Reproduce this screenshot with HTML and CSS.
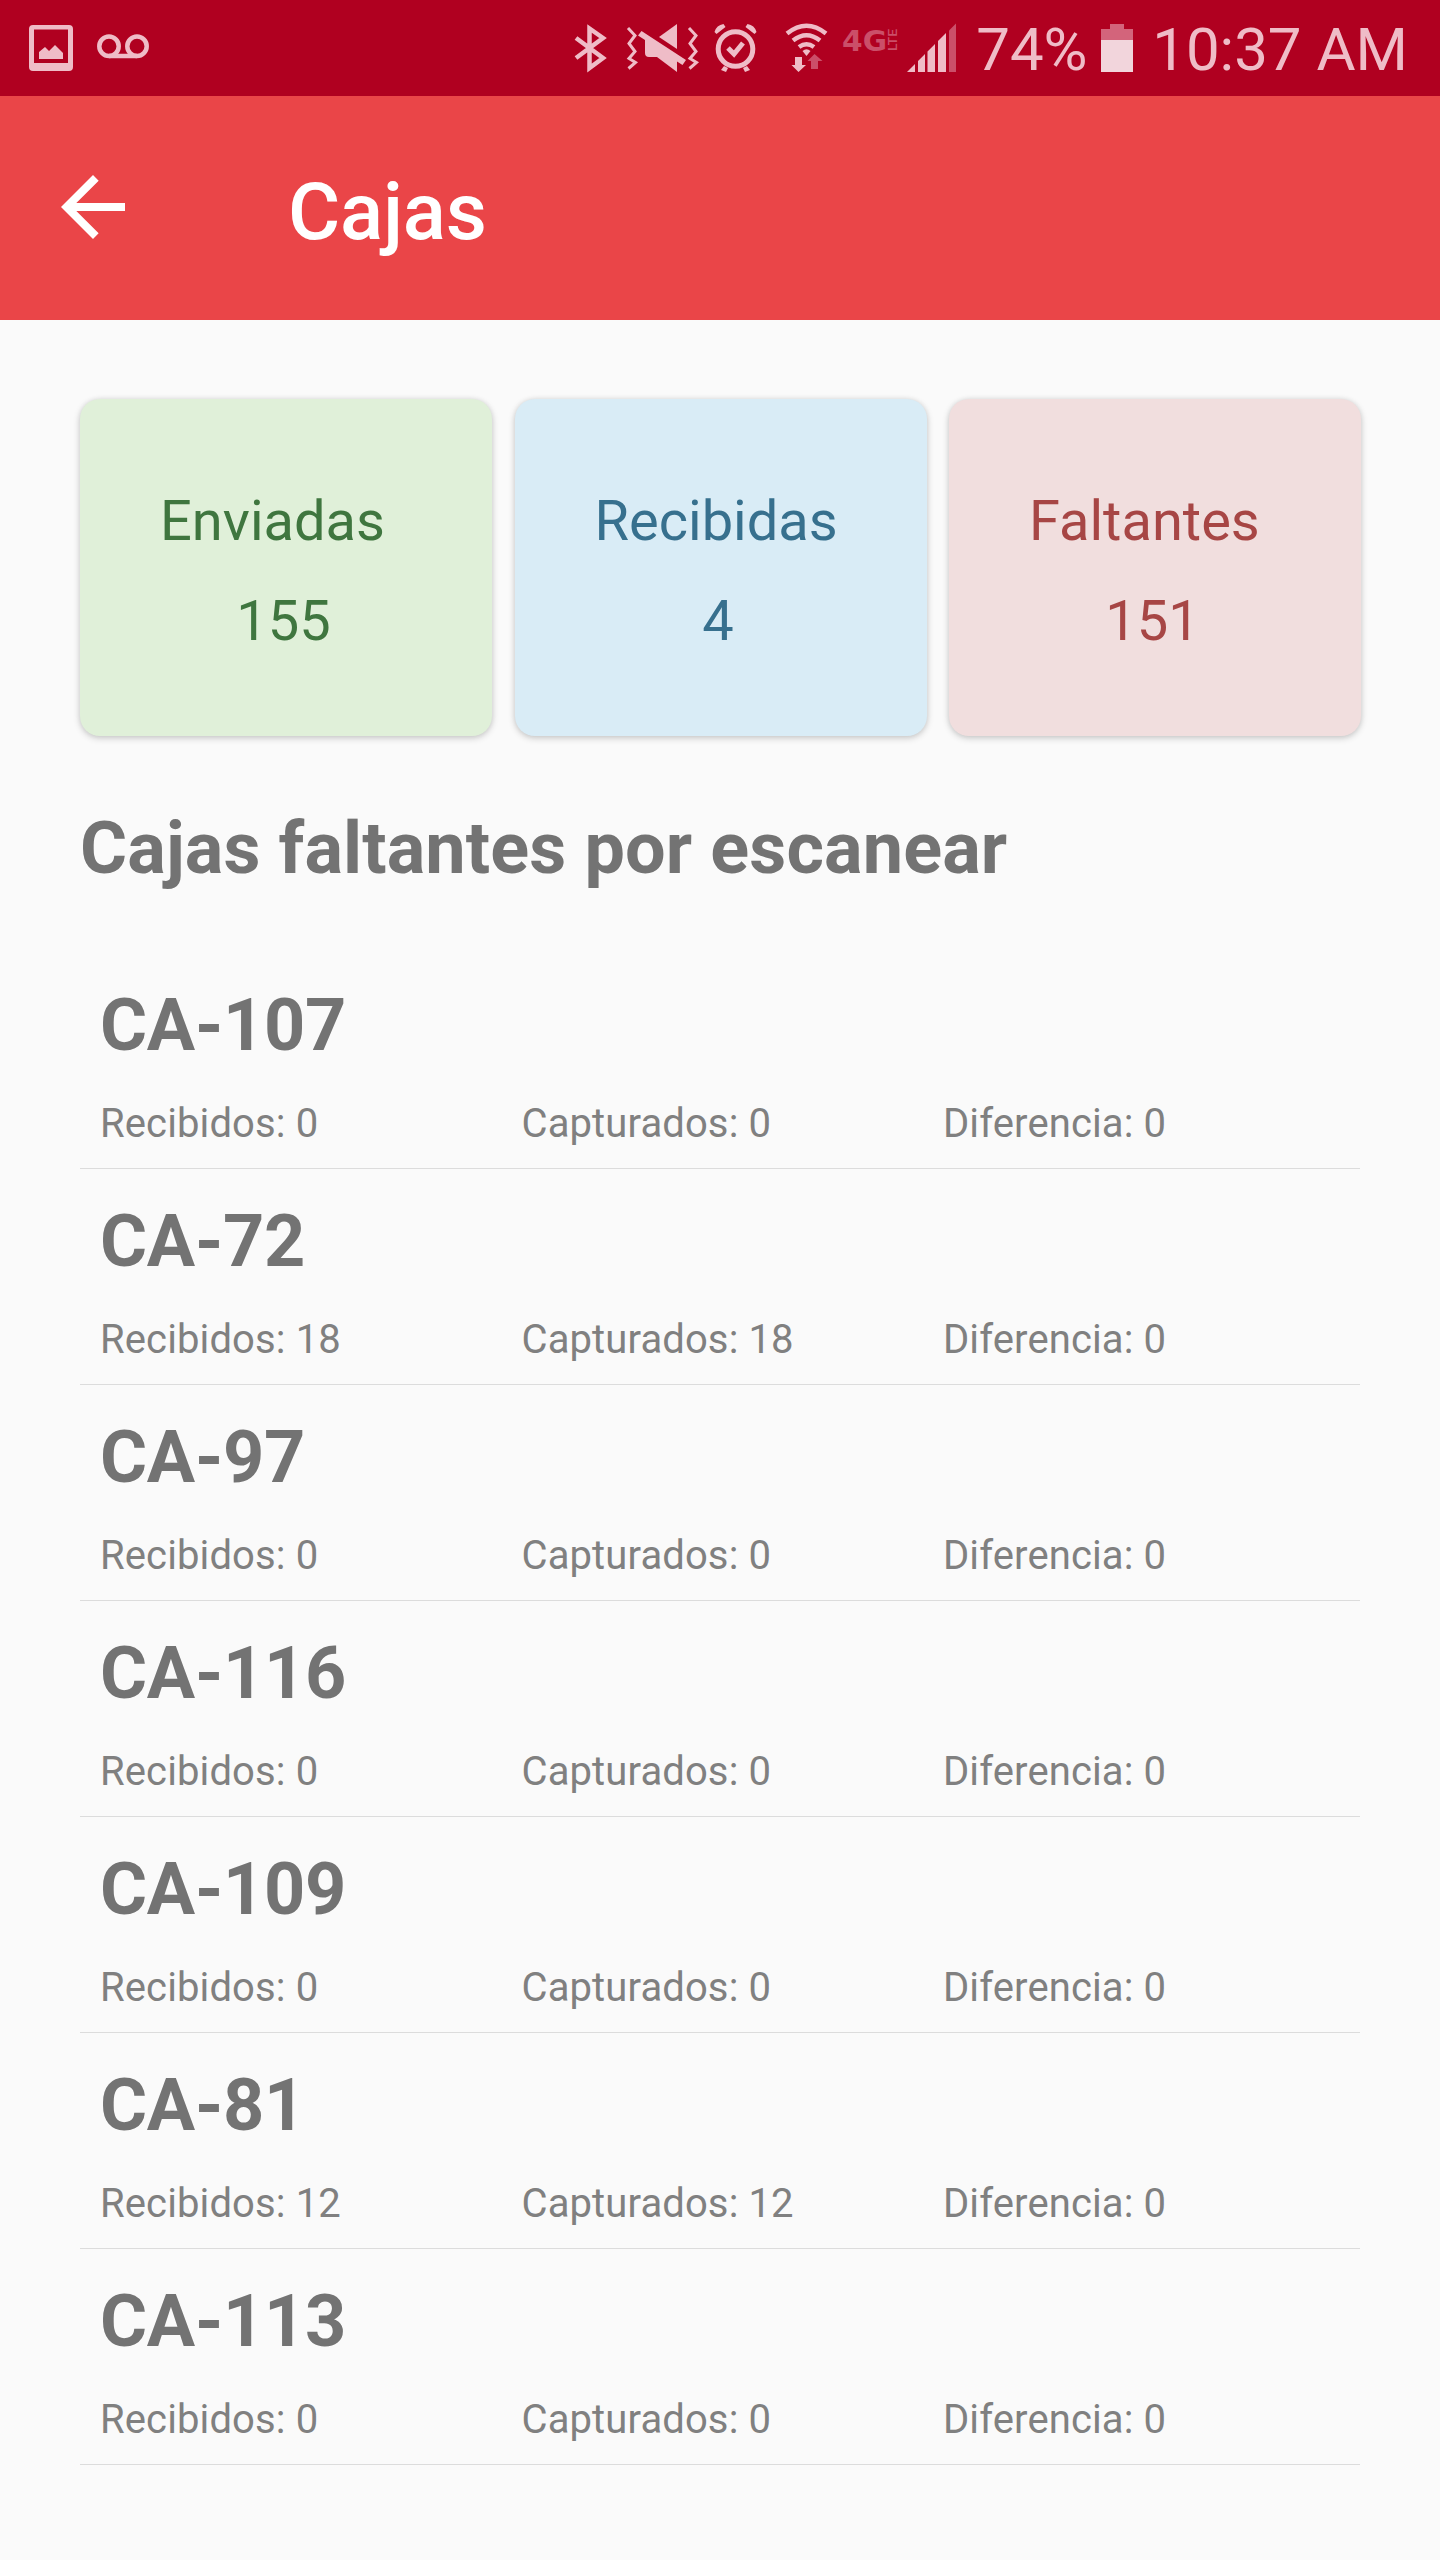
FILE: index.html
```
<!DOCTYPE html>
<html lang="es">
  <head>
    <meta charset="UTF-8" />
    <meta name="viewport" content="width=device-width, initial-scale=1.0" />
    <title>Cajas</title>
    <link rel="stylesheet" href="styles.css">
  </head>
  <body>
    <div class="statusbar">
      <svg class="icon" width="62" height="96" viewBox="24 0 62 96">
        <path fill-rule="evenodd" d="M33 25h36q4 0 4 4v38q0 4-4 4H33q-4 0-4-4V29q0-4 4-4zM34 29.500v33.500h34V29.500z" />
        <path d="M39 59v-7l6-5 4 4 6-6 8 8v6z" />
      </svg>
      <svg class="icon line" width="70" height="96" viewBox="86 0 70 96">
        <circle cx="109" cy="46.300" r="9.700" />
        <circle cx="137" cy="46.300" r="9.700" />
        <path d="M109 56h28" />
      </svg>
      <div class="status-right">
        <svg class="icon line" width="45" height="96" viewBox="570 0 45 96">
          <path d="M576 38l27 20-13.500 10V28.500L603 38l-27 20" />
        </svg>
        <svg class="icon" width="91" height="96" viewBox="615 0 91 96">
          <path class="zigzag" d="M628 28l7 7.500-6 8 6 8-6 7 6.500 4-7 6M689 28l7 7.500-6 8 6 8-6 7 6.500 4-7 6" />
          <path d="M677 24v25l-18-12z" />
          <path d="M641.500 31l44.500 29-3.500 5-5.500-3.500V72l-20-15h-8q-4 0-4-4V40l-7-4.500z" />
        </svg>
        <svg class="icon" width="69" height="96" viewBox="706 0 69 96">
          <circle class="ring" cx="735.500" cy="49" r="17.300" />
          <path class="ring" d="M728 48l6 6 9-11" />
          <path d="M714.500 32q2-7 9-8l2 3-9 7zM756.500 32q-2-7-9-8l-2 3 9 7zM724 66l4 2-2 4-5-2zM747 66l-4 2 2 4 5-2z" />
        </svg>
        <svg class="icon" width="63" height="96" viewBox="775 0 63 96">
          <path class="wave" d="M787 33.500q19.500-15.500 39 0M793 40.500q13.500-10.500 27 0M799 47q7.500-5.500 15 0" />
          <path d="M802.500 51q4-3.500 8 0l-4 5z" />
          <path d="M795 57h7v8h4l-7.500 7-7-7h3.500z" />
          <path class="dim" d="M811 69h7v-8h4.500l-8-7-7 7h3.500z" />
        </svg>
        <svg class="icon" width="62" height="96" viewBox="838 0 62 96">
          <text class="dim network" x="842" y="50.500" textLength="45" lengthAdjust="spacingAndGlyphs">4G</text>
          <text class="dim lte" transform="translate(897 51) rotate(-90)" textLength="22" lengthAdjust="spacingAndGlyphs">LTE</text>
        </svg>
        <svg class="icon" width="76" height="96" viewBox="900 0 76 96">
          <path d="M907 72l8-8v8zM918 72V61l7-7v18zM927.500 72V51.500l7.500-7.500v28zM938 72V41l8-8v39z" />
          <path class="dim" d="M949 72V30.500l7-7v48.500z" />
        </svg>
        <span class="battery-level">74%</span>
        <svg class="icon" width="60" height="96" viewBox="1091 0 60 96">
          <path class="battery-empty" d="M1100 40V29h9v-5h14v5h9v11z" />
          <path class="battery-full" d="M1100 40h32v32h-32z" />
        </svg>
        <span class="clock">10:37 AM</span>
      </div>
    </div>

    <header class="appbar">
      <svg class="back" width="96" height="96" viewBox="0 0 24 24">
        <path d="M20 11H7.830l5.590-5.590L12 4l-8 8 8 8 1.410-1.410L7.830 13H20v-2z" />
      </svg>
      <h1 class="title">Cajas</h1>
    </header>

    <main class="content">
      <div class="cards">
        <div class="card green">
          <div class="label">Enviadas</div>
          <div class="count">155</div>
        </div>
        <div class="card blue">
          <div class="label">Recibidas</div>
          <div class="count">4</div>
        </div>
        <div class="card red">
          <div class="label">Faltantes</div>
          <div class="count">151</div>
        </div>
      </div>

      <h2 class="heading">Cajas faltantes por escanear</h2>

      <div class="list">
        <div class="item">
          <h3 class="name">CA-107</h3>
          <div class="details">
            <span>Recibidos: 0</span>
            <span>Capturados: 0</span>
            <span>Diferencia: 0</span>
          </div>
        </div>
        <div class="item">
          <h3 class="name">CA-72</h3>
          <div class="details">
            <span>Recibidos: 18</span>
            <span>Capturados: 18</span>
            <span>Diferencia: 0</span>
          </div>
        </div>
        <div class="item">
          <h3 class="name">CA-97</h3>
          <div class="details">
            <span>Recibidos: 0</span>
            <span>Capturados: 0</span>
            <span>Diferencia: 0</span>
          </div>
        </div>
        <div class="item">
          <h3 class="name">CA-116</h3>
          <div class="details">
            <span>Recibidos: 0</span>
            <span>Capturados: 0</span>
            <span>Diferencia: 0</span>
          </div>
        </div>
        <div class="item">
          <h3 class="name">CA-109</h3>
          <div class="details">
            <span>Recibidos: 0</span>
            <span>Capturados: 0</span>
            <span>Diferencia: 0</span>
          </div>
        </div>
        <div class="item">
          <h3 class="name">CA-81</h3>
          <div class="details">
            <span>Recibidos: 12</span>
            <span>Capturados: 12</span>
            <span>Diferencia: 0</span>
          </div>
        </div>
        <div class="item">
          <h3 class="name">CA-113</h3>
          <div class="details">
            <span>Recibidos: 0</span>
            <span>Capturados: 0</span>
            <span>Diferencia: 0</span>
          </div>
        </div>
      </div>
    </main>
  </body>
</html>
```
FILE: styles.css
```
* {
  box-sizing: border-box;
}
body {
  margin: 0;
  min-height: 2560px;
  background-color: #fafafa;
  color: #737373;
  font-family: Roboto, sans-serif;
}
h1,
h2,
h3 {
  margin: 0;
}

/* status bar */
.statusbar {
  display: flex;
  height: 96px;
  padding: 0 32px 0 24px;
  background-color: #b00020;
  color: #efbcc7;
  font-size: 60px;
  line-height: 100px;
  white-space: nowrap;
}
.status-right {
  display: flex;
  margin-left: auto;
}
.icon {
  flex: none;
  fill: #efbcc7;
}
.icon.line {
  fill: none;
  stroke: #efbcc7;
  stroke-width: 4.5;
}
.ring {
  fill: none;
  stroke: #efbcc7;
  stroke-width: 5;
}
.wave {
  fill: none;
  stroke: #efbcc7;
  stroke-width: 4.5;
}
.zigzag {
  fill: none;
  stroke: #efbcc7;
  stroke-width: 3;
}
.dim {
  fill: #cb4f69;
}
.network {
  font-family: "DejaVu Sans", sans-serif;
  font-size: 29px;
  font-weight: 700;
}
.lte {
  font-size: 13px;
  font-weight: 500;
}
.battery-empty {
  fill: #d3647b;
}
.battery-full {
  fill: #f2d5dc;
}
.battery-level {
  width: 116px;
}

/* app bar */
.appbar {
  display: flex;
  align-items: center;
  height: 224px;
  padding-left: 45px;
  background-color: #ea4548;
}
.back {
  margin-bottom: 2px;
  fill: #fff;
}
.title {
  margin-left: 147px;
  padding-top: 8px;
  color: #fff;
  font-size: 80px;
  font-weight: 500;
  letter-spacing: -0.2px;
  line-height: 94px;
}

/* content */
.content {
  padding: 79px 80px 0;
}
.cards {
  display: grid;
  grid-template-columns: repeat(3, 412px);
  gap: 22.5px;
}
.card {
  height: 337px;
  padding-top: 72px;
  border-radius: 20px;
  box-shadow: 0 2px 7px rgba(0, 0, 0, 0.2), 0 0 5px rgba(0, 0, 0, 0.06);
  font-size: 56px;
  line-height: 100px;
}
.card.green {
  background-color: #e0f0d9;
  color: #3f763f;
}
.card.blue {
  background-color: #d9ecf6;
  color: #37708e;
}
.card.red {
  background-color: #f1dede;
  color: #a74645;
}
.label {
  padding-left: 80px;
}
.count {
  padding-right: 5px;
  text-align: center;
}
.heading {
  margin-top: 71px;
  font-size: 72px;
  font-weight: 700;
  letter-spacing: 0.12px;
  line-height: 84px;
}
.list {
  margin-top: 62px;
}
.item {
  height: 216px;
  padding: 31px 0 20px 20px;
  border-bottom: 1px solid #dcdcdc;
}
.name {
  font-size: 72px;
  font-weight: 700;
  letter-spacing: -0.3px;
  line-height: 84px;
}
.details {
  display: grid;
  grid-template-columns: repeat(3, 421.5px);
  margin-top: 32px;
  color: #808080;
  font-size: 40px;
  letter-spacing: 0.12px;
  line-height: 48px;
}
```
